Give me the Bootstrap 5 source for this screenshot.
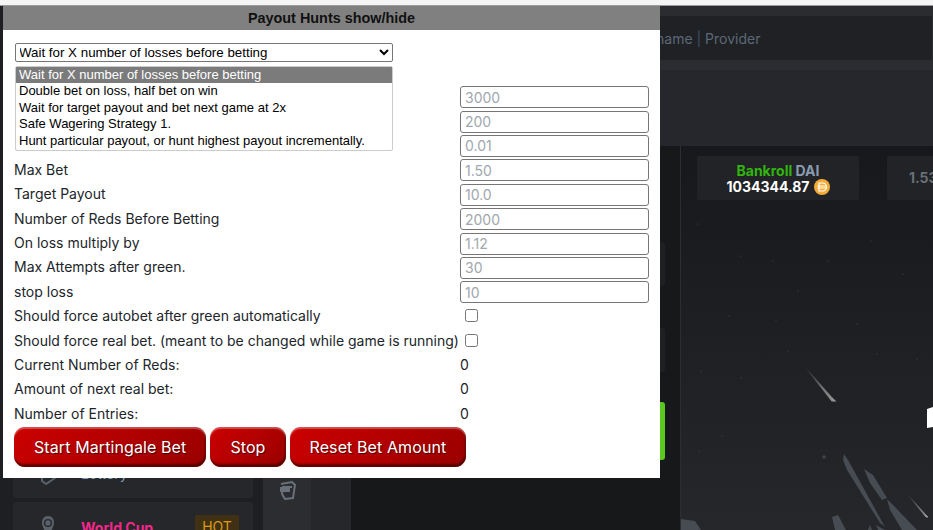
<!DOCTYPE html>
<html lang="en">
<head>
<meta charset="utf-8">
<title>Payout Hunts</title>
<link href="https://cdn.jsdelivr.net/npm/bootstrap@5.3.0/dist/css/bootstrap.min.css" rel="stylesheet">
<style>
html,body{height:530px;overflow:hidden;background:#17181b}
body{position:relative;font-family:Inter,"Liberation Sans",sans-serif;width:933px}
.topstrip{height:6px;background:#f5f5f5;border-bottom:1px solid #9a9a9a}
.backdrop{height:524px;width:933px}
.side-col{width:263px;flex:none;padding:14px 10px 0 13px;background:#1e1f22}
.rail-col{width:88px;flex:none;background:#25272b}
.rail-inner{width:48px;background:#2b2d31;padding-top:471px;text-align:center}
.main-col{width:582px;flex:none}
.topbar{height:64px;background:#2a2c30;padding:10px 0 0}
.search-box{height:44px;background:#1f2124;color:#5d6876;font-size:14px;padding-left:305px;line-height:46px;margin-right:1px}
.search-box i{font-style:normal;color:#3f5266}
.hero-band{height:76px;background:#25272c}
.game-area{height:384px;position:relative;overflow:hidden;background:#17181a}
.game-left{width:330px;flex:none;border-right:1px solid #2b2d31;height:100%}
.tab-col{width:314px;padding-top:96px}
.soft-tab{height:44px;background:#1e2023;border-radius:3px;margin-bottom:42px}
.green-bar{height:58px;background:#5ac81f;border-radius:3px;margin-top:-12px}
.game-right{flex:none;width:252px;height:100%;background:linear-gradient(#17181b,#25272b);position:relative}
.sky{position:absolute;left:0;top:0}
.stat-box{height:44px;flex:none;background:#212327;border-radius:2px;color:#fff;font-weight:700;font-size:14px;line-height:16px;text-align:center;padding-top:7px;position:relative}
.bank-box{width:162px;margin-left:16px;margin-top:10px}
.rate-box{width:60px;margin-left:28px;margin-top:10px;color:#6a6f77;text-align:left;padding:14px 0 0 22px}
.stat-row{display:flex;position:relative}
.bank-green{color:#32b50e}
.bank-dai{color:#8a9bb0}
.side-filler{height:428px}
.side-item{height:50px;background:#25272b;border-radius:3px;margin-bottom:4px;color:#7e9ab8;font-size:14px;padding:0 14px 0 27px;display:flex;align-items:center}
.side-item.wc{color:#f5268a;font-weight:700}
.side-ico{width:16px;flex:none;margin-right:25px}
.hot{background:#403114;color:#dd9a14;width:44px;height:24px;line-height:24px;text-align:center;font-weight:400;font-size:14px;border-radius:2px;margin-left:auto}
.panel{position:absolute;left:3px;top:6px;width:657px;height:472px;background:#fff;color:#212529;font-size:14px}
.panel-head{height:24px;background:gray;color:#111;font:700 14.4px/24px "Liberation Sans",sans-serif;text-align:center}
.panel-body{padding:13px 11px 0 11px;position:relative}
.strategy{display:block;width:378px;height:19px;margin:0 0 4px 1px;font:13.33px "Liberation Sans",sans-serif;color:#000;background:#fff;border:1px solid #767676;border-radius:2px;padding:0;text-indent:-1px}
.strategy-list{display:block;position:relative;z-index:1;width:378px;height:85px;margin-left:1px;border:1px solid #ccc;font:13px/16px "Liberation Sans",sans-serif;color:#000;padding:0;overflow:hidden;outline:0;background:#fff}
.strategy-list option{padding:0 3px;min-height:16px;height:16.4px}
.strategy-list option:checked{background:#7b7b7b linear-gradient(#7b7b7b,#7b7b7b);color:#fff}
.rows{margin-top:-66px}
.frow{height:24.4px;display:flex;align-items:center}
.frow label,.frow .lbl{width:446px;flex:none;white-space:nowrap;margin:0;padding-bottom:2px}
.val{padding-bottom:2px}
.num{width:189px;height:22px;border:1px solid #767676;border-radius:3px;padding:1px 4px;font:14px Inter,"Liberation Sans",sans-serif;color:#000;background:#fff}
.num::placeholder{color:#a0a7ae;opacity:1}
.chk{width:13px;height:13px;margin:0 0 2px 5px}
.actions{margin-top:1px;gap:4px}
.redbtn{height:40px;border:0;border-radius:11px;color:#fff;font:16px Inter,"Liberation Sans",sans-serif;letter-spacing:.1px;padding:0 20px;background:linear-gradient(135deg,#cc0000,#990000);box-shadow:inset 0 2px 1px rgba(255,255,255,.3),inset -1px -3px 2px rgba(70,0,0,.75);text-shadow:1px 1px 1px rgba(0,0,0,.6)}
</style>
</head>
<body>
<div class="topstrip"></div>
<div class="backdrop d-flex">
  <div class="side-col">
    <div class="side-filler"></div>
    <div class="side-item">
      <svg class="side-ico" width="16" height="24" viewBox="0 0 16 24" aria-hidden="true"><path d="M2 16l10-5 3 6-9 6-4-3z" fill="none" stroke="#5b6168" stroke-width="2"/></svg>
      <span>Lottery</span>
    </div>
    <div class="side-item wc">
      <svg class="side-ico" width="16" height="30" viewBox="0 0 16 30" aria-hidden="true"><path d="M8 4c4 0 6 3 6 7 0 4-4 9-6 15-2-6-6-11-6-15 0-4 2-7 6-7z" fill="#5b6168"/><circle cx="8" cy="11" r="3.400" fill="none" stroke="#25272b" stroke-width="1.400"/></svg>
      <span>World Cup</span><span class="hot">HOT</span>
    </div>
  </div>
  <div class="rail-col"><div class="rail-inner h-100">
    <svg width="17" height="19" viewBox="0 0 17 19" aria-hidden="true"><path d="M2 3l11-2 3 3-2 13-8 1-3-5 1-7h9" fill="none" stroke="#6a7078" stroke-width="2"/><path d="M1 6h10v5H1z" fill="#6a7078"/></svg>
  </div></div>
  <div class="main-col">
    <div class="topbar"><div class="search-box">name <i>|</i> Provider</div></div>
    <div class="hero-band"></div>
    <div class="game-area d-flex">
      <div class="game-left">
        <div class="tab-col">
          <div class="soft-tab"></div>
          <div class="soft-tab"></div>
          <div class="green-bar"></div>
        </div>
      </div>
      <div class="game-right">
        <svg class="sky" width="252" height="384" viewBox="0 0 252 384" aria-hidden="true">
          <defs>
            <linearGradient id="m1" x1="0" y1="0" x2="1" y2="1"><stop offset="0" stop-color="#6a6a6a" stop-opacity="0"/><stop offset="1" stop-color="#9a9a9a"/></linearGradient>
          </defs>
          <path d="M124 221 L150 251 L154 255 L151 255 Z" fill="url(#m1)" stroke="url(#m1)" stroke-width="1.200"/>
          <path d="M227 349 L245 369 L247 371 L245 371 Z" fill="url(#m1)" stroke="url(#m1)" stroke-width="1"/>
          <path d="M246 263l6-2v20l-6 1z" fill="#fff"/>
          <path d="M163 308l4 6 37 67-5-4-33-53-4-10zM183 323l9 6 14 23-5 2-12-17zM206 353l6 6 24 25h-15l-12-20zM0 373l14 2 6 9H0zM151 371l6-2 8 15h-11zM187 384l2-5 2 5zM195 379l9 5h-7z" fill="#474c53"/>
          <g fill="#4a4d52">
            <circle cx="17" cy="78" r=".6"/><circle cx="60" cy="110" r=".6"/><circle cx="92" cy="115" r=".6"/><circle cx="117" cy="145" r=".6"/><circle cx="147" cy="115" r=".6"/><circle cx="190" cy="95" r=".6"/><circle cx="222" cy="128" r=".6"/><circle cx="48" cy="170" r=".6"/><circle cx="95" cy="175" r=".6"/><circle cx="176" cy="178" r=".6"/><circle cx="20" cy="225" r=".6"/><circle cx="60" cy="232" r=".6"/><circle cx="107" cy="205" r=".6"/><circle cx="196" cy="208" r=".6"/><circle cx="236" cy="213" r=".6"/><circle cx="41" cy="290" r=".6"/><circle cx="18" cy="305" r=".6"/>
            <path d="M141 310.500h4v1h-4zM142.500 309h1v4h-1z"/>
          </g>
        </svg>
      </div>
      <div class="stat-row position-absolute" style="left:330px;top:0">
        <div class="stat-box bank-box">
          <div><span class="bank-green">Bankroll</span> <span class="bank-dai">DAI</span></div>
          <div class="d-flex justify-content-center align-items-center gap-1">1034344.87
            <svg width="16" height="16" viewBox="0 0 16 16" aria-hidden="true"><circle cx="8" cy="8" r="8" fill="#f5ac37"/><path d="M5 4h3.500a4 4 0 0 1 0 8H5zM3.500 7h9M3.500 9h9" fill="none" stroke="#fff" stroke-width="1.200"/></svg>
          </div>
        </div>
        <div class="stat-box rate-box">1.53</div>
      </div>
    </div>
  </div>
</div>

<section class="panel">
  <div class="panel-head">Payout Hunts show/hide</div>
  <div class="panel-body">
    <select class="strategy" aria-label="Strategy">
      <option>Wait for X number of losses before betting</option>
    </select>
    <select class="strategy-list" size="5" aria-label="Strategy list">
      <option selected>Wait for X number of losses before betting</option>
      <option>Double bet on loss, half bet on win</option>
      <option>Wait for target payout and bet next game at 2x</option>
      <option>Safe Wagering Strategy 1.</option>
      <option>Hunt particular payout, or hunt highest payout incrementally.</option>
    </select>
    <div class="rows">
      <div class="frow"><span class="lbl"></span><input class="num" placeholder="3000"></div>
      <div class="frow"><span class="lbl"></span><input class="num" placeholder="200"></div>
      <div class="frow"><span class="lbl"></span><input class="num" placeholder="0.01"></div>
      <div class="frow"><label>Max Bet</label><input class="num" placeholder="1.50"></div>
      <div class="frow"><label>Target Payout</label><input class="num" placeholder="10.0"></div>
      <div class="frow"><label>Number of Reds Before Betting</label><input class="num" placeholder="2000"></div>
      <div class="frow"><label>On loss multiply by</label><input class="num" placeholder="1.12"></div>
      <div class="frow"><label>Max Attempts after green.</label><input class="num" placeholder="30"></div>
      <div class="frow"><label>stop loss</label><input class="num" placeholder="10"></div>
      <div class="frow"><label>Should force autobet after green automatically</label><input class="chk" type="checkbox"></div>
      <div class="frow"><label>Should force real bet. (meant to be changed while game is running)</label><input class="chk" type="checkbox"></div>
      <div class="frow"><span class="lbl">Current Number of Reds:</span><span class="val">0</span></div>
      <div class="frow"><span class="lbl">Amount of next real bet:</span><span class="val">0</span></div>
      <div class="frow"><span class="lbl">Number of Entries:</span><span class="val">0</span></div>
    </div>
    <div class="d-flex actions">
      <button class="redbtn" type="button">Start Martingale Bet</button>
      <button class="redbtn" type="button">Stop</button>
      <button class="redbtn" type="button">Reset Bet Amount</button>
    </div>
  </div>
</section>
<script src="https://cdn.jsdelivr.net/npm/bootstrap@5.3.0/dist/js/bootstrap.bundle.min.js"></script>
</body>
</html>
